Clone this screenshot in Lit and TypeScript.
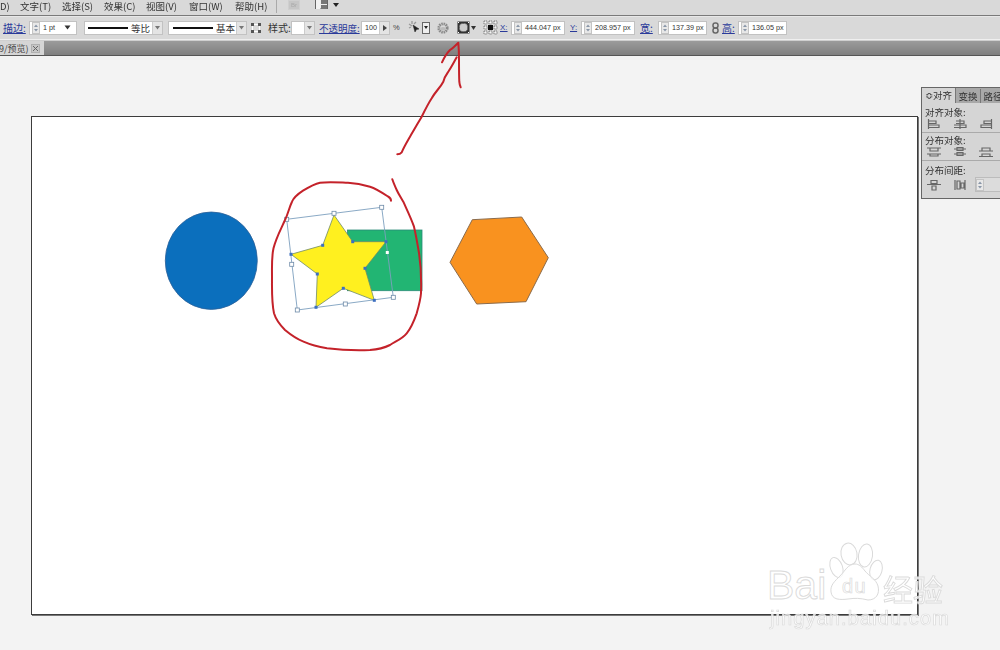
import { LitElement, html, css, svg } from "lit";
import { customElement } from "lit/decorators.js";

const spin = html`<span class="spin"><svg width="8" height="12" viewBox="0 0 8 12"><rect x=".5" y=".5" width="7" height="11" fill="#e8e8e8" stroke="#c4c4c4"/><path d="M4 2.500 6 5H2zM4 9.500 2 7h4z" fill="#8a97a8"/></svg></span>`;
const caret = html`<svg class="caret" width="7" height="5" viewBox="0 0 7 5"><path d="M.5.5h6L3.500 4.500z" fill="#333"/></svg>`;
const ddBtn = html`<span class="ddbtn"><svg width="5" height="4" viewBox="0 0 5 4"><path d="M0 0h5L2.500 3.500z" fill="#777"/></svg></span>`;

const alignRow = (paths: string[]) => html`<div class="icons">${paths.map(
  (d) => html`<svg width="14" height="12" viewBox="0 0 14 12"><path d=${d} fill="none" stroke="#666" stroke-width="1.200"/></svg>`
)}</div>`;

const RED_LOOP = "M391 200.7C391 198 389 197 388 196.5C382 192.5 376 188.5 370 186.7C363 184.5 356 183 348 182.7C338 182.3 328 181.5 320 182.7C314 184 309 187 303 190.7C298 194 294 197 292 201.7C289 208 288 214 285 220C281 229 276 238 273.5 248.3C271.5 257 272 267 272 276.7C272 290 271.5 302 274 313.3C276 320 280 325 285 330C291 335 297 339 303.5 341.7C311 345 319 347 327 348.3C341 350 356 350.5 370 350C377 349.5 384 348 390 345C396 341 402 339 406.7 333.3C411 328 414 321 416.7 313.3C418.5 307 420.5 300 421 293.3C421.5 279 421 266 419 253C417.5 244 416 235 414 226.7C411 218 407 210 403.3 201.7C400.5 197 398.5 194 396.7 190C395 186 393.5 183 392.3 179.3";
const RED_ARROW = "M397.3 154.3C399 154.3 400.5 153.8 401.7 152.3C404 147 407 142 410 136.7C414 130 418 123 421.7 116.7C425 110 428 104 431.7 98.3C435 92 440 88 443.3 81.7C444.5 77 446 75 448.3 71.7C451.5 67 454 62 456.7 57.3";
const RED_HEAD = "M442 62.3C444 58 447 53 450 50C453 48 456 45 458.3 42.7C458.8 48 459 54 459 60C459 67 459 75 459.3 81.7C459.5 84 460 86 460.7 87.3";

@customElement("app-root")
export class AppRoot extends LitElement {
  static styles = css`
    :host { display: block; width: 1000px; height: 650px; overflow: hidden; position: relative; background: #f3f3f3;
      font-family: "Liberation Sans", "Noto Sans CJK SC", sans-serif; }
    .chrome { filter: blur(0.4px); display: flex; flex-direction: column; color: #222; }
    .menu { height: 15px; background: #d9d9d9; display: flex; align-items: flex-start; font-size: 9.5px; line-height: 12px; font-family: "Noto Sans CJK SC", sans-serif; color: #333; white-space: nowrap; }
    .menu span.m { flex: none; }
    .m0 { width: 20px; box-sizing: border-box; }
    .m1, .m2, .m3 { width: 42px; }
    .m4 { width: 43px; }
    .m5 { width: 46px; }
    .m6 { width: 41px; }
    .msep { width: 1px; height: 13px; background: #aaa; flex: none; }
    .br { margin-left: 11px; width: 12px; height: 10px; background: #c6c6c6; border: 1px solid #cfcfcf; box-sizing: border-box; font-size: 6px; color: #aaa; text-align: center; line-height: 8px; font-family: "Liberation Sans", sans-serif; }
    .arr { margin-left: 15px; display: flex; align-items: center; gap: 5px; height: 9px; }
    .line1 { height: 1px; background: #7a7a7a; }
    .control { height: 23px; background: #d9d9d9; border-bottom: 1px solid #efefef; box-shadow: inset 0 1px 0 #e8e8e8; display: flex; align-items: center; font-size: 9px; white-space: nowrap; font-family: "Noto Sans CJK SC", sans-serif; }
    .control > * { flex: none; }
    .lnk { color: #2a3a9a; text-decoration: underline; font-size: 10px; }
    .plain { font-size: 10px; color: #333; }
    .box { background: #fff; border: 1px solid #c2c2c2; box-sizing: border-box; height: 14px; display: flex; align-items: center; font-family: "Liberation Sans", sans-serif; font-size: 7.2px; color: #333; }
    .box > .spin { margin-left: 2px; }
    .spin { display: inline-flex; flex: none; }
    .ddbtn { margin-left: auto; width: 9px; height: 12px; background: #e4e4e4; border-left: 1px solid #ccc; display: inline-flex; align-items: center; justify-content: center; }
    .val { margin-left: 3px; }
    .caret { margin-left: auto; margin-right: 5px; }
    .stroke-line { height: 2px; background: #111; flex: none; }
    .sample { font-family: "Noto Sans CJK SC", sans-serif; font-size: 9.5px; margin-left: 3px; }
    .l-stroke { margin-left: 3px; width: 20px; }
    .b-weight { margin-left: 6px; width: 48px; }
    .b-s1 { margin-left: 7px; width: 79px; padding-left: 3px; }
    .b-s2 { margin-left: 5px; width: 79px; padding-left: 4px; }
    .s-line { width: 40px; }
    .i-swap { margin-left: 3px; width: 12px; height: 12px; display: flex; }
    .l-style { margin-left: 6px; width: 23px; }
    .b-style { width: 24px; }
    .l-opacity { margin-left: 4px; width: 42px; font-size: 9.5px; }
    .b-opacity { width: 29px; }
    .pct { margin-left: 3px; width: 10px; font-size: 7.5px; font-family: "Liberation Sans", sans-serif; color: #444; }
    .wand { margin-left: 5px; width: 13px; height: 13px; display: flex; }
    .dd2 { margin-left: 1px; width: 8px; height: 12px; background: #eee; border: 1px solid #666; box-sizing: border-box; display: flex; align-items: center; justify-content: center; }
    .gear { margin-left: 7px; width: 12px; height: 12px; display: flex; }
    .env { margin-left: 8px; width: 13px; height: 13px; display: flex; }
    .envc { margin-left: 1px; width: 5px; display: flex; }
    .ref { margin-left: 7px; width: 15px; height: 15px; display: flex; }
    .l-x { margin-left: 2px; width: 11px; font-size: 8px; font-family: "Liberation Sans", sans-serif; }
    .b-x { width: 54px; }
    .l-y { margin-left: 5px; width: 11px; font-size: 8px; font-family: "Liberation Sans", sans-serif; }
    .l-w { margin-left: 5px; width: 18px; }
    .b-w { width: 49px; }
    .link { margin-left: 5px; width: 7px; height: 12px; display: flex; }
    .l-h { margin-left: 3px; width: 16px; }
    .b-h { width: 49px; }
    .tabsgap { height: 1px; background: #cfcfcf; }
    .tabs { height: 14px; box-sizing: content-box; background: linear-gradient(#9b9b9b, #7f7f7f); border-bottom: 1px solid #555; display: flex; }
    .tab { width: 44px; background: #d5d5d5; display: flex; align-items: center; font-size: 9px; color: #444; font-family: "Noto Sans CJK SC", sans-serif; overflow: hidden; white-space: nowrap; }
    .tab-t { width: 32px; margin-left: -1px; }
    .close { width: 9px; height: 9px; background: #c6c6c6; border: 1px solid #b0b0b0; box-sizing: border-box; display: flex; align-items: center; justify-content: center; }
    .art { position: absolute; left: 0; top: 0; }
    .panel { position: absolute; left: 921px; top: 87px; width: 79px; height: 112px; box-sizing: border-box; background: #d5d5d5; border: 1px solid #666; border-right: none; font-size: 9.5px; color: #333; font-family: "Noto Sans CJK SC", sans-serif; filter: blur(0.35px); display: flex; flex-direction: column; }
    .ptabs { height: 15px; flex: none; background: #a8a8a8; display: flex; align-items: flex-end; white-space: nowrap; overflow: hidden; }
    .ptab { flex: none; height: 14px; line-height: 14px; text-align: center; border-right: 1px solid #777; box-sizing: border-box; }
    .ptab.on { width: 34px; background: #d5d5d5; height: 15px; line-height: 15px; }
    .ptab.off { width: 25px; }
    .sec { flex: none; box-sizing: border-box; padding: 1px 0 0 3px; border-bottom: 1px solid #aaa; height: 28px; }
    .sec.first { height: 30px; padding-top: 3px; }
    .sec.last { border-bottom: none; height: 37px; padding-top: 3px; overflow: hidden; }
    .lbl { line-height: 12px; height: 12px; }
    .icons { display: flex; gap: 12px; padding-left: 2px; }
    .row3 { display: flex; align-items: center; margin-top: 1px; gap: 8px; }
    .pinput { flex: 1; height: 15px; background: #dcdcdc; border: 1px solid #bcbcbc; border-right: none; box-sizing: border-box; display: flex; align-items: center; }
    .wm { position: absolute; left: 0; top: 0; width: 1000px; height: 650px; pointer-events: none; }
    .wm-t { position: absolute; white-space: nowrap; color: rgba(255,255,255,.8); -webkit-text-stroke: .9px #dadada; line-height: 1; }
    .wm-bai { left: 767px; top: 562px; font: 400 41px "Liberation Sans", sans-serif; }
    .wm-jy { left: 883px; top: 566px; font: 400 30px "Noto Sans CJK SC", sans-serif; }
    .wm-du { left: 842px; top: 575px; font: 400 20px "Liberation Sans", sans-serif; letter-spacing: 1.5px; -webkit-text-stroke: .7px #dadada; }
    .wm-url { left: 770px; top: 607px; font: 400 20px "Liberation Sans", sans-serif; letter-spacing: 1.1px; -webkit-text-stroke: .7px #dadada; }
  `;

  render() {
    return html`
      <div class="chrome">
        <div class="menu">
          <span class="m m0">D)</span>
          <span class="m m1">文字(T)</span><span class="m m2">选择(S)</span><span class="m m3">效果(C)</span>
          <span class="m m4">视图(V)</span><span class="m m5">窗口(W)</span><span class="m m6">帮助(H)</span>
          <span class="msep"></span>
          <span class="br">Br</span>
          <span class="arr"><svg width="13" height="9" viewBox="0 0 13 9"><rect x=".5" y="-1" width="12" height="10" fill="#eee" stroke="#666"/><path d="M1 0h4v9H1z" fill="#f2f2f2"/><path d="M6 0h6v4H6zM6 5h6v4H6z" fill="#777"/></svg><svg width="6" height="4" viewBox="0 0 6 4"><path d="M0 0h6L3 4z" fill="#222"/></svg></span>
        </div>
        <div class="line1"></div>
        <div class="control">
          <span class="lnk l-stroke">描边:</span>
          <span class="box b-weight">${spin}<span class="val">1 pt</span>${caret}</span>
          <span class="box b-s1"><span class="stroke-line s-line"></span><span class="sample">等比</span>${ddBtn}</span>
          <span class="box b-s2"><span class="stroke-line s-line"></span><span class="sample">基本</span>${ddBtn}</span>
          <span class="i-swap"><svg width="12" height="12" viewBox="0 0 12 12"><path d="M1 1h3v3H1zM8 1h3v3H8zM1 8h3v3H1zM8 8h3v3H8z" fill="#555"/><path d="M4 2.500h4M4 9.500h4M2.500 4v4M9.500 4v4" stroke="#fff" stroke-width="1"/></svg></span>
          <span class="plain l-style">样式:</span>
          <span class="box b-style">${ddBtn}</span>
          <span class="lnk l-opacity">不透明度:</span>
          <span class="box b-opacity"><span class="val">100</span><span class="ddbtn"><svg width="4" height="6" viewBox="0 0 4 6"><path d="M0 0l4 3-4 3z" fill="#444"/></svg></span></span>
          <span class="pct">%</span>
          <span class="wand"><svg width="13" height="13" viewBox="0 0 13 13"><path d="M5 4l2 7 1.500-2.500L11 8z" fill="#222" stroke="#222" stroke-width=".5"/><path d="M1 3l3 2M4 0v3M8 1 6 3M1 7l2-1" stroke="#999" stroke-width="1.300"/></svg></span>
          <span class="dd2"><svg width="4" height="3" viewBox="0 0 4 3"><path d="M0 0h4L2 3z" fill="#222"/></svg></span>
          <span class="gear"><svg width="12" height="12" viewBox="0 0 12 12"><circle cx="6" cy="6" r="4.200" fill="none" stroke="#8a8a8a" stroke-width="2.800" stroke-dasharray="1.500 .7"/><path d="M3 8a3 3 0 0 1 6 0z" fill="#bbb"/></svg></span>
          <span class="env"><svg width="13" height="13" viewBox="0 0 13 13"><rect x=".5" y=".5" width="12" height="12" fill="#333"/><rect x="2.500" y="2.500" width="8" height="8" rx="3" fill="#ccc" stroke="#666" stroke-dasharray="1.500 1"/><path d="M1 1h1v1H1zM11 1h1v1h-1zM1 11h1v1H1zM11 11h1v1h-1z" fill="#fff"/></svg></span>
          <span class="envc"><svg width="5" height="4" viewBox="0 0 5 4"><path d="M0 0h5L2.500 4z" fill="#333"/></svg></span>
          <span class="ref"><svg width="15" height="15" viewBox="0 0 15 15"><g fill="#f4f4f4" stroke="#666" stroke-width=".8" stroke-dasharray="1.200 .6">${[1, 6, 11].flatMap((y) => [1, 6, 11].map((x) => (x === 6 && y === 6 ? null : svg`<rect x=${x} y=${y} width="3" height="3"/>`)))}</g><rect x="5" y="5" width="5" height="5" fill="#111"/></svg></span>
          <span class="lnk l-x">X:</span>
          <span class="box b-x">${spin}<span class="val">444.047 px</span></span>
          <span class="lnk l-y">Y:</span>
          <span class="box b-x">${spin}<span class="val">208.957 px</span></span>
          <span class="lnk l-w">宽:</span>
          <span class="box b-w">${spin}<span class="val">137.39 px</span></span>
          <span class="link"><svg width="7" height="12" viewBox="0 0 7 12"><g fill="none" stroke="#666" stroke-width="1.500"><rect x="1" y="1" width="5" height="5" rx="2.200"/><rect x="1" y="6" width="5" height="5" rx="2.200"/></g></svg></span>
          <span class="lnk l-h">高:</span>
          <span class="box b-h">${spin}<span class="val">136.05 px</span></span>
        </div>
        <div class="tabsgap"></div>
        <div class="tabs">
          <span class="tab"><span class="tab-t">9/预览)</span><span class="close"><svg width="5" height="5" viewBox="0 0 5 5"><path d="M0 0l5 5M5 0 0 5" stroke="#666"/></svg></span></span>
        </div>
      </div>

      <svg class="art" width="1000" height="650" viewBox="0 0 1000 650">
        <rect x="32" y="117" width="887" height="499" fill="#777"/>
        <rect x="31.500" y="116.500" width="886" height="498" fill="#fff" stroke="#3c3c3c"/>
        <ellipse cx="211.300" cy="260.700" rx="46" ry="48.700" fill="#0b6fbd" stroke="#2b5f98" stroke-width=".8"/>
        <polygon points="472.300,219.700 521.700,217 548.300,257.700 526,301.700 476.700,304 450,262.300" fill="#f9921f" stroke="#8a6b4c" stroke-width="1"/>
        <rect x="347.500" y="230" width="74.500" height="60.700" fill="#22b573" stroke="#2a8a78" stroke-width=".8"/>
        <polygon points="334,215 352.700,241.700 386,241.700 365,268.300 374.300,300.300 343.300,288.300 316,307.300 317.300,274 291,254.300 322.700,245.300" fill="#fff01f" stroke="#6f8a6a" stroke-width=".8"/>
        <polygon points="286.700,219.300 381.700,207.300 393.300,297.300 297.300,310" fill="none" stroke="#7d9fbe" stroke-width=".9"/>
        <g fill="#fff" stroke="#6d8aa8" stroke-width=".8">
          ${[[286.7, 219.3], [381.7, 207.3], [393.3, 297.3], [297.3, 310], [334, 213.3], [345.3, 304], [291.7, 264.3]].map(([x, y]) => svg`<rect x=${x - 2} y=${y - 2} width="4" height="4"/>`)}
        </g>
        <rect x="385.800" y="251" width="3" height="3" fill="#fff"/>
        <g fill="#3d6fc0">
          ${[[352.7, 241.7], [386, 241.7], [365, 268.3], [374.3, 300.3], [343.3, 288.3], [316, 307.3], [317.3, 274], [291, 254.3], [322.7, 245.3]].map(([x, y]) => svg`<rect x=${x - 1.5} y=${y - 1.5} width="3" height="3"/>`)}
        </g>
        <g fill="none" stroke="#c4222a" stroke-width="2" stroke-linecap="round" stroke-linejoin="round">
          <path d=${RED_LOOP}/>
          <path d=${RED_ARROW}/>
          <path d=${RED_HEAD}/>
        </g>
      </svg>

      <div class="panel">
        <div class="ptabs">
          <span class="ptab on">≎对齐</span><span class="ptab off">变换</span><span class="ptab off">路径</span>
        </div>
        <div class="sec first">
          <div class="lbl">对齐对象:</div>
          ${alignRow(["M1.500 1v10M2 3h7v2.500H2M2 7h10v2.500H2", "M7 1v10M3 3h8v2.500H3M1 7h12v2.500H1", "M12.500 1v10M12 3H5v2.500h7M12 7H2v2.500h10"])}
        </div>
        <div class="sec">
          <div class="lbl">分布对象:</div>
          ${alignRow(["M0 2h14M3 2h8v3H3zM0 8h14M3 8h8v2H3z", "M1 3h12M1 8h12M4 1.500h6v3H4zM4 6.500h6v3H4z", "M0 5h14M3 2h8v3H3zM0 10.500h14M3 8h8v2.500H3z"])}
        </div>
        <div class="sec last">
          <div class="lbl">分布间距:</div>
          <div class="row3">
            ${alignRow(["M0 5.500h14M4 1.500h6v3H4zM5 7h4v4H5z", "M2 1v10M12 1v10M4 2h3v8H4zM8 4h3v5H8z"])}
            <span class="pinput">${spin}</span>
          </div>
        </div>
      </div>

      <div class="wm">
        <svg class="art" width="1000" height="650" viewBox="0 0 1000 650">
          <g fill="rgba(255,255,255,.75)" stroke="#dadada" stroke-width="1">
            <ellipse cx="836.500" cy="567.500" rx="6" ry="10.500" transform="rotate(-20 836.500 567.500)"/>
            <ellipse cx="849" cy="554" rx="8" ry="11" transform="rotate(-10 849 554)"/>
            <ellipse cx="865.500" cy="555.500" rx="7" ry="11.500" transform="rotate(8 865.500 555.500)"/>
            <ellipse cx="876" cy="570" rx="6" ry="10" transform="rotate(15 876 570)"/>
            <path d="M855 564C848 564 845 571 840 576C835 581 830 585 831 592C832 600 840 600 848 599C855 598 860 598 868 600C876 600 880 594 878 586C876 579 869 576 865 571C862 567 859 564 855 564Z"/>
          </g>
        </svg>
        <span class="wm-t wm-bai">Bai</span>
        <span class="wm-t wm-du">du</span>
        <span class="wm-t wm-jy">经验</span>
        <span class="wm-t wm-url">jingyan.baidu.com</span>
      </div>
    `;
  }
}
